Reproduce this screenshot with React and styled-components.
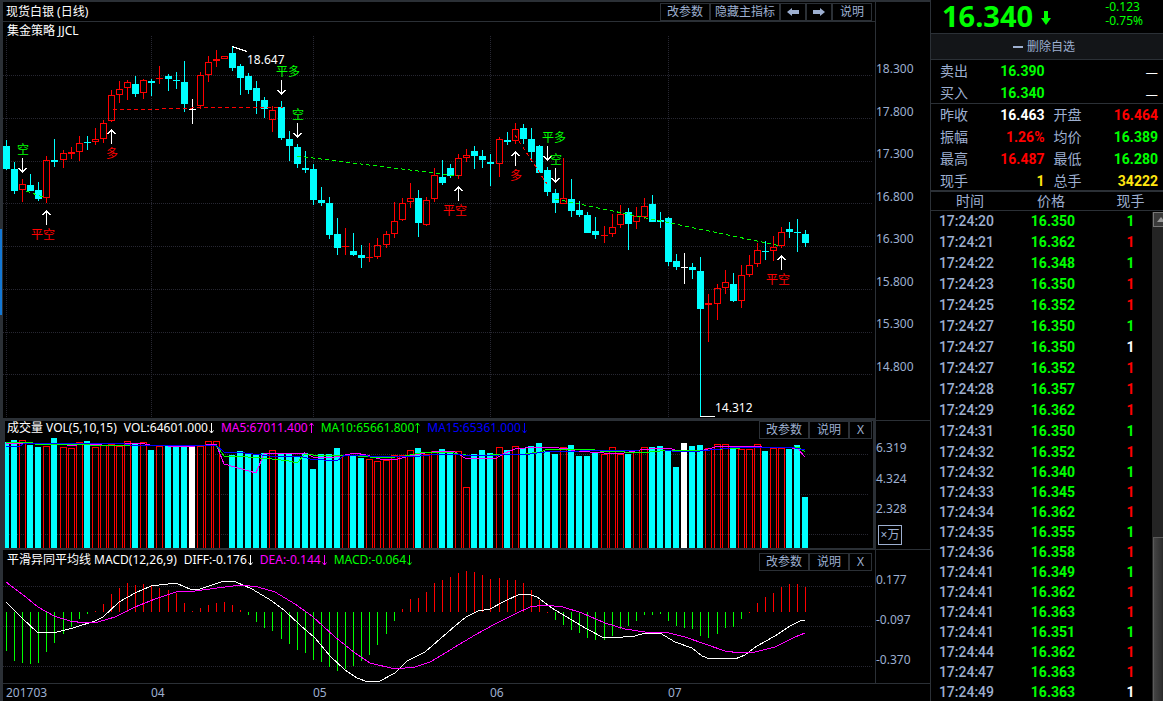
import { styled, createGlobalStyle } from "styled-components";

const GlobalStyle = createGlobalStyle`
    * {
        box-sizing: border-box;
    }
    body {
        margin: 0;
        background: #000;
        color: #fff;
        font-family: "Noto Sans", "Noto Sans CJK SC", sans-serif;
        font-size: 12px;
        line-height: 18px;
    }
`;

const colors = {
    line: "#2b3036",
    grid: "#272732",
    label: "#9dafd0",
    red: "#ff0000",
    green: "#00ff00",
    cyan: "#00ffff",
    magenta: "#ff00ff",
    blue: "#0000ff",
    white: "#ffffff",
    yellow: "#ffe610",
};

// [kind, high, low, bodyTop, bodyBottom, volumeTop, macdEnd]
const bars = [
    ["c", 140, 170, 146, 169, 442, 651], ["c", 162, 194, 169, 191, 440, 661],
    ["r", 179, 202, 184, 190, 440, 663], ["c", 174, 191, 185, 191, 445, 664],
    ["c", 182, 201, 190, 199, 447, 663], ["r", 156, 203, 160, 198, 446, 652],
    ["c", 139, 167, 160, 162, 438, 643], ["r", 150, 168, 153, 160, 447, 634],
    ["r", 147, 159, 152, 154, 448, 627], ["r", 136, 161, 143, 152, 442, 619],
    ["c", 136, 150, 142, 143, 441, 614], ["r", 128, 145, 139, 142, 447, 611],
    ["r", 120, 143, 123, 139, 445, 604], ["r", 90, 122, 95, 121, 444, 594],
    ["r", 81, 103, 89, 95, 446, 588], ["r", 80, 100, 82, 88, 441, 583],
    ["c", 76, 97, 84, 94, 444, 585], ["r", 79, 99, 80, 93, 442, 584],
    ["c", 79, 96, 81, 83, 450, 586], ["r", 66, 84, 78, 79, 446, 588],
    ["c", 74, 91, 76, 79, 445, 590], ["c", 72, 89, 80, 81, 446, 593],
    ["c", 61, 112, 82, 104, 446, 603], ["w", 99, 124, 109, 110, 446, 611],
    ["r", 72, 109, 75, 106, 446, 608], ["r", 56, 82, 62, 75, 441, 605],
    ["r", 50, 67, 59, 61, 441, 603], ["r", 56, 59, 56, 59, 548, 602],
    ["c", 46, 71, 53, 68, 455, 605], ["c", 64, 95, 66, 78, 451, 610],
    ["c", 73, 94, 76, 90, 453, 615], ["c", 81, 114, 88, 101, 455, 622],
    ["c", 97, 118, 100, 109, 453, 628], ["r", 106, 132, 110, 120, 450, 631],
    ["c", 101, 140, 107, 138, 453, 639], ["c", 131, 161, 139, 146, 453, 644],
    ["c", 144, 168, 147, 164, 456, 650], ["c", 151, 173, 168, 170, 453, 653],
    ["c", 164, 205, 169, 200, 469, 660], ["c", 187, 206, 200, 203, 454, 662],
    ["c", 197, 239, 203, 235, 454, 667], ["c", 218, 255, 234, 248, 448, 671],
    ["r", 228, 255, 246, 247, 455, 669], ["c", 233, 256, 251, 255, 456, 666],
    ["c", 245, 268, 255, 258, 458, 661], ["r", 243, 262, 257, 258, 459, 655],
    ["r", 238, 259, 245, 257, 461, 645], ["r", 231, 248, 234, 245, 460, 634],
    ["r", 202, 238, 221, 234, 455, 621], ["r", 198, 221, 203, 220, 455, 609],
    ["r", 183, 208, 198, 202, 450, 599], ["c", 190, 237, 198, 223, 448, 598],
    ["r", 197, 226, 200, 225, 454, 592], ["r", 168, 202, 175, 199, 451, 583],
    ["c", 160, 185, 177, 183, 449, 580], ["c", 164, 178, 168, 176, 452, 577],
    ["r", 154, 179, 158, 176, 451, 573], ["r", 149, 162, 155, 158, 487, 571],
    ["c", 146, 169, 151, 156, 454, 572], ["c", 150, 168, 156, 160, 450, 575],
    ["c", 154, 186, 162, 164, 453, 579], ["r", 137, 177, 139, 164, 447, 578],
    ["c", 132, 145, 140, 142, 450, 580], ["r", 123, 144, 129, 141, 446, 580],
    ["c", 124, 144, 128, 139, 448, 583], ["c", 128, 162, 139, 152, 446, 590],
    ["c", 145, 173, 146, 173, 443, 600], ["c", 167, 196, 170, 192, 451, 612],
    ["c", 189, 213, 193, 203, 454, 620], ["r", 158, 204, 198, 204, 447, 625],
    ["c", 179, 217, 199, 211, 445, 630], ["c", 201, 217, 210, 215, 456, 633],
    ["c", 212, 233, 215, 233, 456, 638], ["c", 217, 239, 231, 235, 453, 640],
    ["r", 226, 243, 235, 236, 454, 640], ["r", 214, 237, 227, 234, 447, 636],
    ["r", 205, 228, 214, 225, 454, 629], ["c", 208, 250, 212, 224, 454, 626],
    ["r", 207, 229, 216, 222, 450, 621], ["r", 198, 219, 206, 217, 447, 615],
    ["c", 195, 222, 204, 222, 447, 615], ["c", 212, 228, 220, 222, 446, 614],
    ["c", 217, 266, 218, 262, 451, 621], ["c", 254, 270, 261, 267, 467, 626],
    ["w", 253, 284, 267, 268, 443, 628], ["c", 263, 279, 267, 270, 446, 629],
    ["c", 257, 416, 271, 309, 445, 636], ["r", 294, 342, 303, 305, 448, 638],
    ["r", 284, 320, 288, 304, 444, 634], ["r", 270, 294, 282, 288, 444, 628],
    ["c", 273, 302, 284, 301, 447, 627], ["r", 265, 308, 275, 301, 449, 619],
    ["r", 255, 277, 265, 275, 449, 612], ["r", 243, 267, 250, 264, 444, 603],
    ["c", 241, 260, 251, 252, 451, 597], ["r", 236, 261, 247, 251, 448, 593],
    ["r", 227, 248, 232, 246, 448, 587], ["c", 222, 238, 229, 232, 449, 584],
    ["c", 219, 252, 232, 233, 445, 584], ["c", 230, 247, 234, 243, 497, 587],
];

const kindColor = { c: colors.cyan, r: colors.red, w: colors.white };
const barX = (i) => 6 + 8 * i + Math.floor((i + 7) / 13.5);

// [direction, x, arrowTop, text, textX, textBaseline]
const signals = [
    ["down", 22, 158, "空", 17, 154],
    ["down", 281, 80, "平多", 276, 76],
    ["down", 297, 123, "空", 292, 119],
    ["down", 547, 146, "平多", 542, 142],
    ["down", 555, 168, "空", 550, 164],
    ["up", 46, 211, "平空", 31, 239],
    ["up", 111, 130, "多", 106, 158],
    ["up", 458, 187, "平空", 443, 215],
    ["up", 515, 152, "多", 510, 180],
    ["up", 781, 256, "平空", 766, 284],
];

const trends = [
    ["green", "26,191 46,198"],
    ["red", "113,109 160,109 192,108 284,107"],
    ["green", "297,156 458,176"],
    ["red", "515,135 547,184"],
    ["green", "555,199 781,246"],
];

const ma5 = "6,443 60,443 70,446 85,444 95,445 110,443 140,443 150,445 185,447 216,444 224,464 256,473 264,454 305,453 313,457 330,458 345,455 355,453 366,455 380,459 398,459 410,456 425,453 440,451 455,452 465,458 495,459 505,453 515,449 535,447 550,447 568,449 575,451 590,452 604,453 624,453 640,450 660,448 672,449 680,452 700,451 712,448 718,446 740,446 762,447 785,447 798,449 805,457";
const ma10 = "6,443 30,442 35,444 75,444 90,445 216,445 224,456 248,457 272,459 289,461 297,463 305,454 313,455 345,455 370,457 395,457 405,456 420,453 450,452 458,454 466,455 490,455 510,454 525,454 540,452 548,449 590,449 600,451 625,452 650,452 660,451 672,450 710,450 722,449 740,448 795,447 800,448 805,452";
const ma15 = "6,446 20,446 25,443 120,443 130,445 216,445 224,452 245,453 270,456 300,456 310,459 337,461 345,455 368,456 400,457 420,456 440,454 460,454 466,456 500,455 530,454 545,452 580,451 640,450 665,450 672,451 700,451 730,448 760,447 795,448 805,450";
const diff = "6,602 22,618 38,633 57,632 73,628 95,621 103,617 119,602 135,593 151,586 176,583 192,590 200,589 224,581 236,582 252,589 272,601 285,611 300,625 315,638 330,656 345,670 357,678 368,682 380,681 395,673 407,661 425,652 440,639 455,626 466,617 478,611 490,609 505,601 520,594 528,594 537,597 552,608 570,619 587,629 602,637 612,638 635,636 645,633 660,633 675,642 692,648 702,656 710,659 725,658 735,659 745,655 757,646 775,636 790,626 800,621 805,620";
const dea = "6,582 22,594 38,607 54,616 70,621 85,623 98,622 115,617 135,607 155,599 176,592 195,591 225,587 242,585 258,587 275,592 295,604 312,616 335,637 355,653 370,663 395,669 415,667 430,662 442,655 455,647 475,635 495,624 515,614 530,607 545,605 563,607 582,613 605,623 625,629 645,632 665,632 685,637 705,644 725,651 740,653 755,652 775,647 795,637 805,633";

const quotes = [
    ["昨收", "16.463", "white"], ["开盘", "16.464", "red"],
    ["振幅", "1.26%", "red"], ["均价", "16.389", "green"],
    ["最高", "16.487", "red"], ["最低", "16.280", "green"],
    ["现手", "1", "yellow"], ["总手", "34222", "yellow"],
];

const ticks = [
    ["17:24:20", "16.350", "green"], ["17:24:21", "16.362", "red"],
    ["17:24:22", "16.348", "green"], ["17:24:23", "16.350", "red"],
    ["17:24:25", "16.352", "red"], ["17:24:27", "16.350", "green"],
    ["17:24:27", "16.350", "white"], ["17:24:27", "16.352", "red"],
    ["17:24:28", "16.357", "red"], ["17:24:29", "16.362", "red"],
    ["17:24:31", "16.350", "green"], ["17:24:32", "16.352", "red"],
    ["17:24:32", "16.340", "green"], ["17:24:33", "16.345", "red"],
    ["17:24:34", "16.362", "red"], ["17:24:35", "16.355", "green"],
    ["17:24:36", "16.358", "red"], ["17:24:41", "16.349", "green"],
    ["17:24:41", "16.362", "red"], ["17:24:41", "16.363", "red"],
    ["17:24:41", "16.351", "green"], ["17:24:44", "16.362", "red"],
    ["17:24:47", "16.363", "red"], ["17:24:49", "16.363", "white"],
];

const Page = styled.div`
    display: flex;
    height: 100vh;
    overflow: hidden;
`;

const Edge = styled.div`
    width: 3px;
    flex: none;
    background: ${colors.line};
    padding-top: 229px;
`;

const EdgeMark = styled.div`
    width: 2px;
    height: 86px;
    background: #1478d4;
`;

const Charts = styled.main`
    flex: 1;
    min-width: 0;
    border-top: 2px solid ${colors.line};
`;

const Row = styled.section`
    display: grid;
    grid-template-columns: 1fr 55px;
`;

const TitleBar = styled.header`
    display: flex;
    justify-content: space-between;
    align-items: flex-end;
    height: 20px;
    padding: 0 3px;
    border-bottom: 1px solid ${colors.line};
`;

const Title = styled.h1`
    margin: 0;
    font-size: 12px;
    font-weight: normal;
    line-height: 18px;
`;

const Plot = styled.div`
    position: relative;
    min-width: 0;
    border-style: solid;
    border-color: ${colors.line};
    border-width: ${(props) => (props.$framed ? "0 2px" : "0")};
    border-bottom-width: ${(props) => props.$bottom}px;
`;

const Canvas = styled.svg`
    display: block;
    width: 100%;
    height: ${(props) => props.$height}px;
    shape-rendering: crispEdges;
    text {
        font-size: 12px;
    }
`;

const PlotHead = styled.div`
    position: absolute;
    top: 0;
    left: 0;
    right: 0;
    display: flex;
    justify-content: space-between;
    align-items: flex-start;
    padding: ${(props) => (props.$framed ? "0 1px 0 2px" : "0 3px 0 4px")};
`;

const Readings = styled.div`
    display: flex;
    gap: 7px;
    line-height: ${(props) => props.$line}px;
    white-space: nowrap;
`;

const Reading = styled.span`
    display: flex;
    align-items: center;
    gap: 1px;
    color: ${(props) => colors[props.$color]};
`;

const Buttons = styled.div`
    display: flex;
    margin-top: ${(props) => props.$top || 0}px;
`;

const Button = styled.button`
    display: flex;
    align-items: center;
    justify-content: center;
    width: ${(props) => props.$width}px;
    height: 18px;
    padding: 0;
    border: 1px solid ${colors.line};
    background: #000;
    color: ${colors.label};
    font: inherit;
    white-space: nowrap;
`;

const Axis = styled.div`
    display: flex;
    flex-direction: column;
    justify-content: space-between;
    padding: ${(props) => props.$pad || "0"};
    border-left: 1px solid ${colors.line};
    border-bottom: ${(props) => (props.$bottom ? 1 : 0)}px solid ${colors.line};
    color: ${colors.label};
    line-height: ${(props) => props.$line || 18}px;
`;

const Unit = styled.span`
    width: 24px;
    margin-left: 2px;
    border: 1px solid ${colors.label};
    line-height: 18px;
    text-align: center;
`;

const Dates = styled.div`
    display: grid;
    grid-template-columns: 145px 162px 177px 178px 1fr;
    padding-left: 3px;
    border-top: 1px solid ${colors.line};
    color: ${colors.label};
`;

const Sidebar = styled.aside`
    display: flex;
    flex-direction: column;
    flex: none;
    width: 233px;
    border-left: 1px solid ${colors.line};
    overflow: hidden;
`;

const Last = styled.div`
    display: flex;
    align-items: center;
    height: 33px;
    padding: 0 20px 2px 11px;
    color: ${colors.green};
    svg {
        margin: 4px 0 0 8px;
    }
`;

const LastPrice = styled.strong`
    font-size: 29px;
    line-height: 32px;
`;

const Change = styled.div`
    margin-left: auto;
    padding-bottom: 3px;
    line-height: 14px;
`;

const RemoveButton = styled.button`
    display: flex;
    align-items: center;
    justify-content: center;
    gap: 4px;
    height: 27px;
    padding: 0 6px 0 0;
    border: solid ${colors.line};
    border-width: 1px 0;
    background: #131518;
    color: ${colors.label};
    font: inherit;
`;

const Quotes = styled.dl`
    display: grid;
    grid-template-columns: 1fr 1fr;
    grid-auto-rows: 22px;
    column-gap: 9px;
    height: ${(props) => props.$rows * 22}px;
    margin: 0;
    padding: 0 5px 0 9px;
    font-size: 14px;
    line-height: 22px;
    border-bottom: ${(props) => props.$line}px solid ${colors.line};
`;

const Quote = styled.div`
    display: flex;
    justify-content: space-between;
    dt {
        color: ${colors.label};
    }
    dd {
        margin: 0;
        color: ${(props) => colors[props.$color]};
        font-family: Roboto, "Noto Sans CJK SC", sans-serif;
        font-weight: bold;
    }
`;

const Dash = styled.dd`
    ${Quote} && {
        font-family: "Noto Sans CJK SC", sans-serif;
        font-weight: normal;
    }
`;

const Feed = styled.div`
    position: relative;
    flex: 1;
    min-height: 0;
    overflow: hidden;
`;

const Ticks = styled.table`
    width: 100%;
    border-collapse: collapse;
    table-layout: fixed;
    font-size: 14px;
    line-height: 18px;
    text-align: center;
    th, td {
        padding: 0;
    }
    th {
        height: 18px;
        border-bottom: 1px solid ${colors.line};
        color: ${colors.label};
        font-weight: normal;
    }
    th:nth-child(1) {
        width: 34%;
        padding-right: 1px;
    }
    th:nth-child(2) {
        width: 38%;
        padding-right: 6px;
    }
    tbody tr {
        height: 21px;
    }
    tbody tr:nth-child(n + 12) {
        height: 20px;
    }
    td {
        font-family: Roboto, sans-serif;
        font-weight: bold;
    }
    td:nth-child(1) {
        padding-right: 8px;
        color: ${colors.label};
        font-weight: 500;
    }
    td:nth-child(2) {
        padding-right: 2px;
        color: ${colors.green};
    }
    th:nth-child(3), td:nth-child(3) {
        padding-left: 4px;
        padding-right: 4px;
    }
`;

const Size = styled.td`
    color: ${(props) => colors[props.$color]};
`;

// the bar runs past the panel's right edge
const ScrollBar = styled.div`
    position: absolute;
    top: 20px;
    right: -6px;
    bottom: 0;
    display: flex;
    flex-direction: column;
    width: 17px;
    background: #242424;
`;

const ScrollUp = styled.button`
    display: flex;
    align-items: center;
    justify-content: center;
    flex: none;
    height: 15px;
    margin-left: 1px;
    padding: 0;
    border: 1px solid #777;
    background: #3a3a3a;
`;

const Thumb = styled.div`
    height: 164px;
    margin-top: auto;
    margin-left: 1px;
    border: 1px solid #5a5a5a;
    border-bottom: 0;
    background: linear-gradient(90deg, #454545, #1c1c1c);
`;

function Grid({ rows, cols = [] }) {
    return (
        <g stroke={colors.grid} strokeDasharray="1 1">
            {rows.map((y) => <line key={y} x1="3" x2="100%" y1={y + 0.5} y2={y + 0.5}/>)}
            {cols.map((x) => <line key={x} x1={x + 0.5} x2={x + 0.5} y1="36" y2="417"/>)}
        </g>
    );
}

function Candle({ x, bar }) {
    const [kind, high, low, top, bottom] = bar;
    const color = kindColor[kind];
    const hollow = kind === "r" && bottom - top > 2;
    return (
        <g fill={color}>
            <rect x={x} y={high} width="1" height={Math.max(0, top - high)}/>
            <rect x={x} y={bottom} width="1" height={Math.max(0, low - bottom)}/>
            {hollow
                ? <rect x={x - 2.5} y={top + 0.5} width="6" height={bottom - top - 1} fill="none" stroke={color}/>
                : <rect x={x - 3} y={top} width="7" height={bottom - top}/>}
        </g>
    );
}

function Volume({ x, bar }) {
    const [kind, , , , , top] = bar;
    if (top >= 548) {
        return null;
    }
    if (kind === "r") {
        return <rect x={x - 2.5} y={top + 0.5} width="6" height={560 - top} fill="none" stroke={colors.red}/>;
    }
    return <rect x={x - 3} y={top} width="6" height={548 - top} fill={kindColor[kind]}/>;
}

function Signal({ signal }) {
    const [dir, x, y, text, textX, textY] = signal;
    const tip = dir === "down" ? y + 14 : y;
    const wing = dir === "down" ? tip - 4 : tip + 4;
    return (
        <g>
            <path
                d={`M${x + 0.5} ${y}V${y + 14}M${x - 3.5} ${wing}L${x + 0.5} ${tip}L${x + 4.5} ${wing}`}
                fill="none"
                stroke="#fff"
            />
            <text x={textX} y={textY} fill={dir === "down" ? colors.green : colors.red}>{text}</text>
        </g>
    );
}

function Line({ points, color }) {
    return <polyline points={points} fill="none" stroke={color}/>;
}

function SmallArrow({ up }) {
    return (
        <svg width="5" height="12" viewBox="0 0 5 12" fill="none" stroke="currentColor" aria-hidden="true">
            <path d={up ? "M2.5 11V1M.5 3.500L2.500 1L4.500 3.500" : "M2.5 1V11M.5 8.500L2.500 11L4.500 8.500"}/>
        </svg>
    );
}

function BlockArrow({ flip }) {
    return (
        <svg width="12" height="8" viewBox="0 0 12 8" fill={colors.label} aria-hidden="true">
            <path d={flip ? "M12 4L7 0V2H0V6H7V8Z" : "M0 4L5 0V2H12V6H5V8Z"}/>
        </svg>
    );
}

function PanelButtons({ top }) {
    return (
        <Buttons $top={top}>
            <Button $width={50}>改参数</Button>
            <Button $width={40}>说明</Button>
            <Button $width={23} aria-label="关闭">X</Button>
        </Buttons>
    );
}

export default function App() {
    return (
        <Page>
            <GlobalStyle/>
            <Edge><EdgeMark/></Edge>
            <Charts>
                <Row>
                    <TitleBar>
                        <Title>现货白银 (日线)</Title>
                        <Buttons>
                            <Button $width={50}>改参数</Button>
                            <Button $width={70}>隐藏主指标</Button>
                            <Button $width={26} aria-label="上一个"><BlockArrow/></Button>
                            <Button $width={26} aria-label="下一个"><BlockArrow flip/></Button>
                            <Button $width={40}>说明</Button>
                        </Buttons>
                    </TitleBar>
                    <Axis/>
                </Row>
                <Row>
                    <Plot $bottom={3}>
                        <PlotHead>
                            <Readings $line={18}>集金策略 JJCL</Readings>
                        </PlotHead>
                        <Canvas $height={396}>
                            <g transform="translate(-3 -22)">
                                <Grid rows={[75, 118, 161, 203, 246, 289, 332, 374]} cols={[6, 151, 313, 490, 668]}/>
                                {bars.map((bar, i) => <Candle key={i} x={barX(i)} bar={bar}/>)}
                                {trends.map(([color, points]) => (
                                    <polyline key={points} points={points} fill="none" stroke={colors[color]} strokeDasharray="4 3"/>
                                ))}
                                {signals.map((signal) => <Signal key={signal[1]} signal={signal}/>)}
                                <path d="M232 46.500L247 51.500M700 416.500H715" fill="none" stroke="#fff"/>
                                <text x="247" y="64" fill="#fff">18.647</text>
                                <text x="715" y="412" fill="#fff">14.312</text>
                            </g>
                        </Canvas>
                    </Plot>
                    <Axis $pad="38px 0 44px" $bottom>
                        <span>18.300</span>
                        <span>17.800</span>
                        <span>17.300</span>
                        <span>16.800</span>
                        <span>16.300</span>
                        <span>15.800</span>
                        <span>15.300</span>
                        <span>14.800</span>
                    </Axis>
                </Row>
                <Row>
                    <Plot $framed $bottom={2}>
                        <PlotHead $framed>
                            <Readings $line={14}>
                                <Reading $color="white">成交量 VOL(5,10,15)</Reading>
                                <Reading $color="white">VOL:64601.000<SmallArrow/></Reading>
                                <Reading $color="magenta">MA5:67011.400<SmallArrow up/></Reading>
                                <Reading $color="green">MA10:65661.800<SmallArrow up/></Reading>
                                <Reading $color="blue">MA15:65361.000<SmallArrow/></Reading>
                            </Readings>
                            <PanelButtons/>
                        </PlotHead>
                        <Canvas $height={127}>
                            <g transform="translate(-5 -421)">
                                <Grid rows={[454, 494, 534]}/>
                                {bars.map((bar, i) => <Volume key={i} x={barX(i)} bar={bar}/>)}
                                <Line points={ma5} color={colors.magenta}/>
                                <Line points={ma10} color={colors.green}/>
                                <Line points={ma15} color={colors.blue}/>
                            </g>
                        </Canvas>
                    </Plot>
                    <Axis $pad="12px 0 4px" $line={30} $bottom>
                        <span>6.319</span>
                        <span>4.324</span>
                        <span>2.328</span>
                        <Unit>×万</Unit>
                    </Axis>
                </Row>
                <Row>
                    <Plot $bottom={0}>
                        <PlotHead>
                            <Readings $line={20}>
                                <Reading $color="white">平滑异同平均线 MACD(12,26,9)</Reading>
                                <Reading $color="white">DIFF:-0.176<SmallArrow/></Reading>
                                <Reading $color="magenta">DEA:-0.144<SmallArrow/></Reading>
                                <Reading $color="green">MACD:-0.064<SmallArrow/></Reading>
                            </Readings>
                            <PanelButtons top={3}/>
                        </PlotHead>
                        <Canvas $height={133}>
                            <g transform="translate(-3 -550)">
                                <Grid rows={[586, 626, 666]}/>
                                {bars.map((bar, i) => (
                                    <rect
                                        key={i}
                                        x={barX(i)}
                                        y={Math.min(612, bar[6])}
                                        width="1"
                                        height={Math.max(1, Math.abs(bar[6] - 612))}
                                        fill={bar[6] > 612 ? colors.green : colors.red}
                                    />
                                ))}
                                <Line points={diff} color={colors.white}/>
                                <Line points={dea} color={colors.magenta}/>
                            </g>
                        </Canvas>
                    </Plot>
                    <Axis $pad="21px 0 14px">
                        <span>0.177</span>
                        <span>-0.097</span>
                        <span>-0.370</span>
                    </Axis>
                </Row>
                <Dates>
                    <span>201703</span>
                    <span>04</span>
                    <span>05</span>
                    <span>06</span>
                    <span>07</span>
                </Dates>
            </Charts>
            <Sidebar>
                <Last>
                    <LastPrice>16.340</LastPrice>
                    <svg width="10" height="14" viewBox="0 0 10 14" fill="currentColor" aria-hidden="true">
                        <path d="M3 0H7V7H10L5 14L0 7H3Z"/>
                    </svg>
                    <Change>
                        <div>-0.123</div>
                        <div>-0.75%</div>
                    </Change>
                </Last>
                <RemoveButton>
                    <svg width="10" height="2" aria-hidden="true"><rect width="10" height="2" fill={colors.label}/></svg>
                    删除自选
                </RemoveButton>
                <Quotes $rows={2} $line={1}>
                    <Quote $color="green"><dt>卖出</dt><dd>16.390</dd></Quote>
                    <Quote $color="white"><dt/><Dash>—</Dash></Quote>
                    <Quote $color="green"><dt>买入</dt><dd>16.340</dd></Quote>
                    <Quote $color="white"><dt/><Dash>—</Dash></Quote>
                </Quotes>
                <Quotes $rows={4} $line={2}>
                    {quotes.map(([name, value, color]) => (
                        <Quote key={name} $color={color}>
                            <dt>{name}</dt>
                            <dd>{value}</dd>
                        </Quote>
                    ))}
                </Quotes>
                <Feed>
                    <Ticks>
                        <thead>
                            <tr>
                                <th>时间</th>
                                <th>价格</th>
                                <th>现手</th>
                            </tr>
                        </thead>
                        <tbody>
                            {ticks.map(([time, price, color], i) => (
                                <tr key={i}>
                                    <td>{time}</td>
                                    <td>{price}</td>
                                    <Size $color={color}>1</Size>
                                </tr>
                            ))}
                        </tbody>
                    </Ticks>
                    <ScrollBar>
                        <ScrollUp aria-label="向上滚动">
                            <svg width="8" height="5" viewBox="0 0 8 5" aria-hidden="true"><path d="M0 5L4 0L8 5Z" fill="#999"/></svg>
                        </ScrollUp>
                        <Thumb/>
                    </ScrollBar>
                </Feed>
            </Sidebar>
        </Page>
    );
}
